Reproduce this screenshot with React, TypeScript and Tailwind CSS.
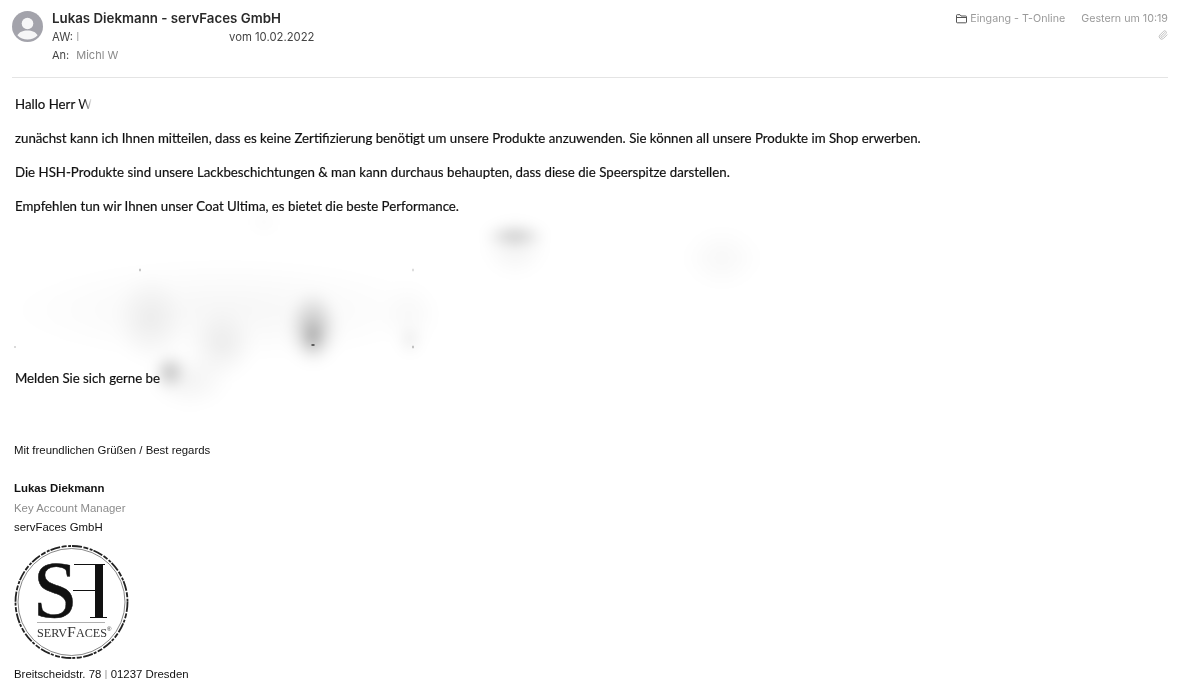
import { Paperclip } from "lucide-react";

function Avatar() {
  return (
    <svg width="31" height="31" viewBox="0 0 31 31" className="shrink-0">
      <circle cx="15.5" cy="15.5" r="15.5" fill="#a3a3ab" />
      <circle cx="15.5" cy="12.5" r="5.8" fill="#f6f6f7" />
      <path d="M5.5 24.5c1.6-3.6 5.4-5 10-5s8.400 1.400 10 5c-2.600 2.800-6 4-10 4s-7.400-1.200-10-4z" fill="#f6f6f7" />
    </svg>
  );
}

function FolderIcon() {
  return (
    <svg width="11" height="10" viewBox="0 0 11 10" fill="none" stroke="#555" strokeWidth="1">
      <path d="M.5 8V1.500a.8.8 0 0 1 .8-.8h2.700l1 1.300h4.700a.8.8 0 0 1 .8.8V8a.8.8 0 0 1-.8.8H1.300A.8.8 0 0 1 .5 8z" />
      <path d="M.5 3.500h10" />
    </svg>
  );
}

function Logo() {
  return (
    <svg width="116" height="114" viewBox="0 0 116 114" className="block">
      <circle cx="57.5" cy="57" r="56" fill="none" stroke="#222" strokeWidth="1.800" strokeDasharray="10 1.500 5 1.500 3 1" />
      <circle cx="57.5" cy="57" r="53.500" fill="none" stroke="#555" strokeWidth="0.700" />
      <text x="19" y="72" fontFamily="'Liberation Serif', serif" fontSize="80" fill="#111" stroke="#111" strokeWidth="0.500">S</text>
      <path d="M60 19.500H91M59 45.500H81M76 72.500H93" stroke="#111" fill="none" strokeWidth="1.100" />
      <rect x="81" y="19" width="8" height="54" fill="#111" />
      <path d="M23 77.500H91" stroke="#b0b0b0" strokeWidth="1" />
      <text x="23" y="92" fontFamily="'Liberation Serif', serif" fontSize="11.500" fill="#333" textLength="70" lengthAdjust="spacingAndGlyphs">
        SERV<tspan fontSize="15">F</tspan>ACES
      </text>
      <text x="93" y="86" fontFamily="'Liberation Sans', sans-serif" fontSize="6" fill="#333">®</text>
    </svg>
  );
}

export default function App() {
  return (
    <div className="relative h-[679px] w-[1200px] overflow-hidden bg-white font-['Inter','Liberation_Sans',sans-serif]">
      {/* header */}
      <div className="ml-3 flex h-[78px] w-[1156px] justify-between border-b border-[#e4e4e4] pt-[11px]">
        <div className="flex gap-[9px]">
          <Avatar />
          <div className="flex flex-col gap-[5px]">
            <div className="text-[13.300px] font-semibold leading-[15px] text-[#2a2a2a]">Lukas Diekmann - servFaces GmbH</div>
            <div className="flex text-[11.300px] leading-[13px] text-[#444]">
              <span className="w-[177px]">AW: <span className="text-[#aaa]">I</span></span>
              <span>vom 10.02.2022</span>
            </div>
            <div className="flex gap-[7px] text-[11px] leading-[13px] text-[#444]">
              <span>An:</span>
              <span className="text-[#8a8a8a]">Michl W</span>
            </div>
          </div>
        </div>
        <div className="flex flex-col items-end gap-[3px]">
          <div className="flex items-center text-[10.700px] leading-[16px] text-[#9a9a9a]">
            <span className="mr-[3px]"><FolderIcon /></span>
            <span>Eingang - T-Online</span>
            <span className="ml-[16px]">Gestern um 10:19</span>
          </div>
          <Paperclip className="h-[10px] w-[10px] text-[#b5b5b5]" />
        </div>
      </div>

      {/* body */}
      <div className="flex flex-col pl-[14px] pt-[18px]">
        <div className="ml-px flex flex-col gap-[17px] font-['Lato','Liberation_Sans',sans-serif] text-[13.250px] leading-[17px] text-[#111] [-webkit-text-stroke:0.2px_#111]">
          <p>
            Hallo Herr <span className="bg-linear-to-r from-[#111] from-40% to-transparent bg-clip-text text-transparent [-webkit-text-stroke:0]">W</span>
          </p>
          <p>zunächst kann ich Ihnen mitteilen, dass es keine Zertifizierung benötigt um unsere Produkte anzuwenden. Sie können all unsere Produkte im Shop erwerben.</p>
          <p>Die HSH-Produkte sind unsere Lackbeschichtungen &amp; man kann durchaus behaupten, dass diese die Speerspitze darstellen.</p>
          <p>Empfehlen tun wir Ihnen unser Coat Ultima, es bietet die beste Performance.</p>
          <p className="mt-[138px]">Melden Sie sich gerne be</p>
        </div>

        <div className="mt-[56px] font-['Liberation_Sans',sans-serif] text-[11.400px] leading-[14px] text-[#111]">
          <p>Mit freundlichen Grüßen / Best regards</p>
          <p className="mt-[24px] font-bold">Lukas Diekmann</p>
          <p className="mt-[6px] text-[#8c8c8c]">Key Account Manager</p>
          <p className="mt-[5px]">servFaces GmbH</p>
          <div className="mt-[11px]"><Logo /></div>
          <p className="mt-[8px]">Breitscheidstr. 78 <span className="text-[#999]">|</span> 01237 Dresden</p>
        </div>
      </div>

      {/* retouching smudges painted over the page */}
      <div className="pointer-events-none absolute inset-0 mix-blend-multiply blur-[7px] bg-[radial-gradient(ellipse_215px_50px_at_225px_310px,rgba(0,0,0,0.035),transparent),radial-gradient(ellipse_34px_45px_at_150px_320px,rgba(0,0,0,0.06),transparent),radial-gradient(ellipse_32px_35px_at_222px_345px,rgba(0,0,0,0.07),transparent),radial-gradient(ellipse_24px_36px_at_313px_328px,rgba(0,0,0,0.26),transparent),radial-gradient(ellipse_8px_16px_at_313px_338px,rgba(0,0,0,0.3),transparent),radial-gradient(ellipse_14px_16px_at_170px_372px,rgba(0,0,0,0.3),transparent),radial-gradient(ellipse_40px_28px_at_190px_380px,rgba(0,0,0,0.05),transparent),radial-gradient(ellipse_9px_14px_at_410px_340px,rgba(0,0,0,0.1),transparent),radial-gradient(ellipse_28px_34px_at_410px_315px,rgba(0,0,0,0.025),transparent),radial-gradient(ellipse_30px_8px_at_515px_236px,rgba(0,0,0,0.28),transparent),radial-gradient(ellipse_32px_30px_at_515px_247px,rgba(0,0,0,0.05),transparent),radial-gradient(ellipse_38px_30px_at_722px_258px,rgba(0,0,0,0.03),transparent),radial-gradient(ellipse_14px_9px_at_264px_222px,rgba(0,0,0,0.03),transparent)]" />
      <div className="pointer-events-none absolute inset-0 mix-blend-multiply bg-[radial-gradient(ellipse_2.500px_1.500px_at_313px_345px,rgba(0,0,0,0.9),transparent),radial-gradient(ellipse_1px_2px_at_140px_270px,rgba(0,0,0,0.5),transparent),radial-gradient(ellipse_1px_2px_at_413px_270px,rgba(0,0,0,0.3),transparent),radial-gradient(ellipse_1px_1px_at_15px_347px,rgba(0,0,0,0.5),transparent),radial-gradient(ellipse_1px_2px_at_413px_347px,rgba(0,0,0,0.5),transparent)]" />
    </div>
  );
}
